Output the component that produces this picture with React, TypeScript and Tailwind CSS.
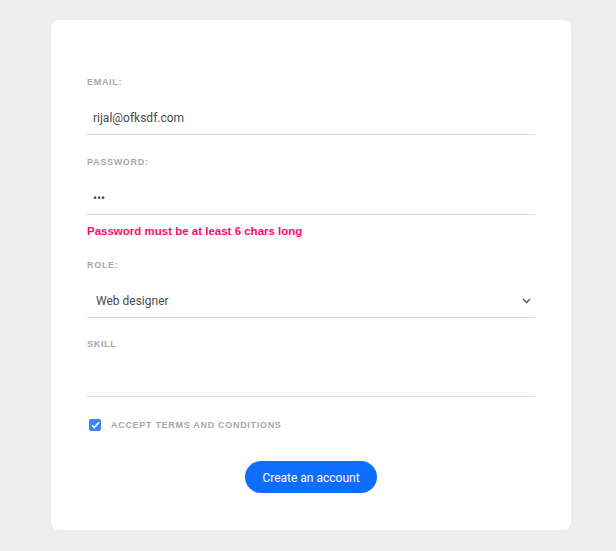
import React from "react";

const labelCls =
	"block text-[9px] font-bold uppercase tracking-[0.7px] text-[#a8a8a8] leading-[12px] [font-family:'Liberation_Sans',Arial,sans-serif]";

const inputCls =
	"w-full h-[36px] border-b border-[#dcdcdc] px-[6px] pt-[2px] text-[12px] text-[#4a4a4a] outline-none bg-transparent [font-family:Roboto,sans-serif]";

export default function App() {
	return (
		<div className="min-h-[551px] bg-[#ededed] pt-[20px] pb-[21px]">
			<div className="ml-[51px] w-[520px] h-[510px] rounded-[8px] bg-white px-[36px] pt-[56px]">
				{/* Email */}
				<label className={labelCls}>Email:</label>
				<input className={`${inputCls} mt-[11px]`} defaultValue="rijal@ofksdf.com" />

				{/* Password */}
				<label className={`${labelCls} mt-[21px]`}>Password:</label>
				<input type="password" className={`${inputCls} mt-[11px]`} defaultValue="abc" />
				<p className="mt-[9px] text-[11.5px] leading-[14px] font-bold text-[#ff0a6c] [font-family:'Liberation_Sans',Arial,sans-serif]">
					Password must be at least 6 chars long
				</p>

				{/* Role */}
				<label className={`${labelCls} mt-[21px]`}>Role:</label>
				<div className="mt-[11px] h-[36px] border-b border-[#dcdcdc] flex items-center justify-between pl-[9px] pr-[4px] pt-[2px] text-[12px] text-[#4a4a4a] [font-family:Roboto,sans-serif]">
					<span>Web designer</span>
					<svg width="9" height="6" viewBox="0 0 9 6" fill="none" stroke="#555" strokeWidth="1.3">
						<path d="M1 1l3.5 3.5L8 1" />
					</svg>
				</div>

				{/* Skill */}
				<label className={`${labelCls} mt-[20px]`}>Skill</label>
				<input className={`${inputCls} mt-[11px]`} />

				{/* Terms */}
				<div className="mt-[20px] h-[16px] flex items-center gap-[10px] pl-[2px]">
					<span className="w-[12px] h-[12px] rounded-[2px] bg-[#3b82f6] flex items-center justify-center">
						<svg width="9" height="8" viewBox="0 0 9 8" fill="none" stroke="white" strokeWidth="1.6">
							<path d="M1 4.2l2.3 2.3L8 1.3" />
						</svg>
					</span>
					<span className={labelCls}>Accept terms and conditions</span>
				</div>

				{/* Submit */}
				<div className="mt-[28px] flex justify-center">
					<button className="h-[32px] w-[132px] rounded-full bg-[#0d6efd] pt-[1px] text-white text-[12px] [font-family:Roboto,sans-serif]">
						Create an account
					</button>
				</div>
			</div>
		</div>
	);
}
